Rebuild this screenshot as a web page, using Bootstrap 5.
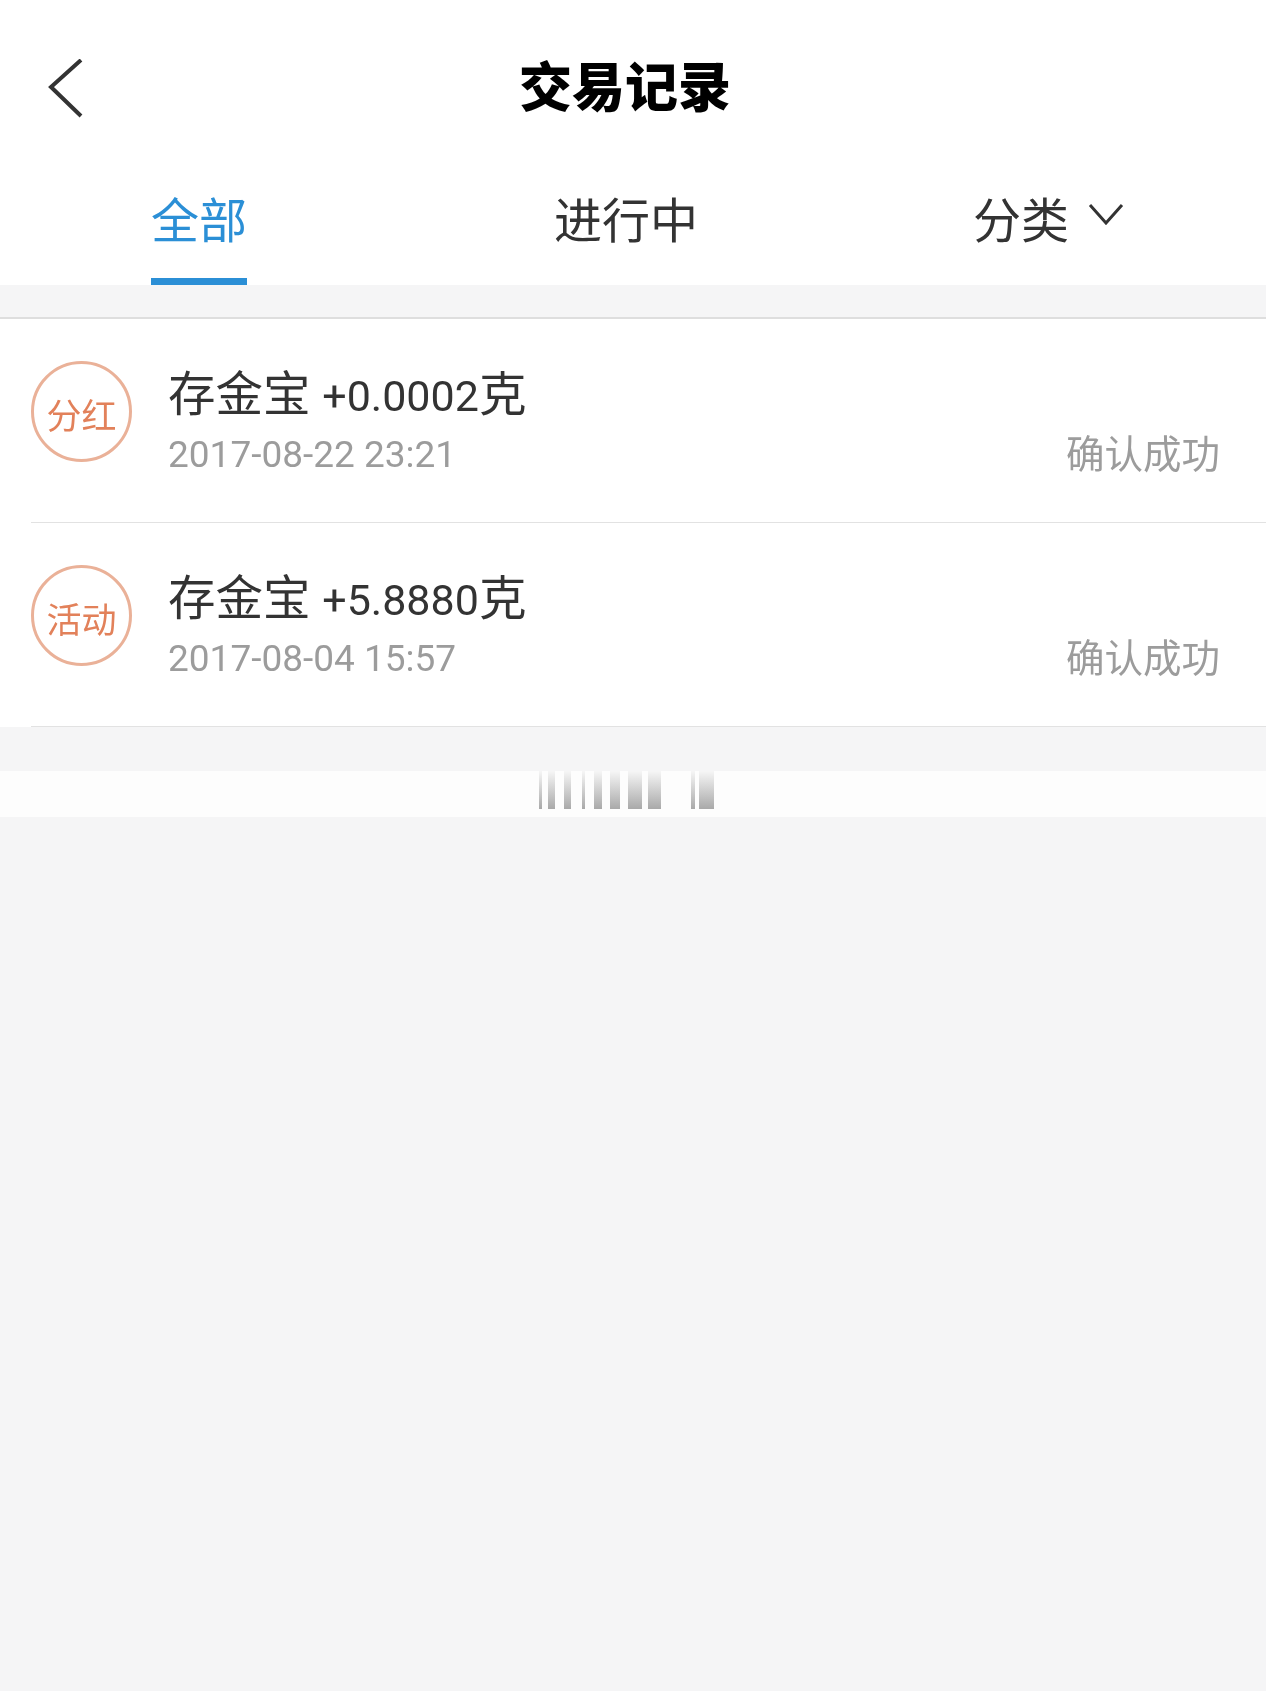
<!DOCTYPE html>
<html lang="zh-CN">

<head>
    <meta charset="UTF-8">
    <meta name="viewport" content="width=device-width, initial-scale=1">
    <title>交易记录</title>
    <link href="https://cdn.jsdelivr.net/npm/bootstrap@5.3.0/dist/css/bootstrap.min.css" rel="stylesheet">
    <style>
        body {
            background: #f5f5f6;
            min-height: 1691px;
            font-family: Roboto, "Noto Sans CJK SC", sans-serif;
            color: #333;
        }

        .top-bar { height: 174px; padding: 59px 0 0 48px; }
        .top-bar svg { display: block; }
        .page-title {
            position: absolute;
            left: 0;
            right: 16px;
            top: 53px;
            margin: 0;
            font: 900 53px/62px "Noto Sans CJK SC", sans-serif;
            color: #000;
            text-align: center;
        }

        .tab-row { height: 111px; }
        .tab-cell { font: 400 48px/86px "Noto Sans CJK SC", sans-serif; color: #333; height: 111px; filter: blur(.4px); }
        .tab-all { padding-right: 24px; }
        .tab-mid { padding-right: 14px; }
        .tab-cat { padding-right: 13px; }
        .tab-on { display: inline-block; height: 111px; color: #2b8fd6; border-bottom: 7px solid #2b8fd6; }
        .cat-arrow { margin: 0 0 22px 19px; }

        .gap-band { height: 34px; border-bottom: 2px solid #dedede; }

        .tx-row { padding: 0 0 0 31px; border: 0; background: #fff; }
        .tx-inner { height: 204px; padding: 42px 46px 0 0; border-bottom: 1px solid #e2e2e2; }
        .tx-stamp {
            width: 101px;
            height: 101px;
            border: 3px solid #eab198;
            color: #e2815a;
            font: 400 35px/1 "Noto Sans CJK SC", sans-serif;
            padding-top: 4px;
            flex: none;
            filter: blur(.3px);
        }
        .tx-body { margin-left: 36px; filter: blur(.4px); }
        .tx-name { font-size: 47.5px; line-height: 62px; margin-top: 3px; color: #333; }
        .tx-name .amount { font-size: 43px; }
        .tx-date { font-size: 37px; line-height: 50px; color: #9c9c9c; margin-top: 3px; }
        .tx-state { font: 400 38.5px/50px "Noto Sans CJK SC", sans-serif; color: #9c9c9c; margin-top: 65px; filter: blur(.4px); }

        .blur-strip { height: 46px; margin-top: 44px; background: #fdfdfd; padding-left: 538px; }
        .blur-strip svg { display: block; filter: blur(.6px); }
    </style>
</head>

<body>
    <header class="bg-white position-relative">
        <div class="top-bar">
            <svg width="38" height="60" viewBox="0 0 38 60" fill="none" stroke="#333" stroke-width="4">
                <path d="M33 1 3 28 33 57" />
            </svg>
        </div>
        <h1 class="page-title">交易记录</h1>
        <div class="row g-0 tab-row text-center">
            <div class="col-4 tab-cell tab-all"><span class="tab-on">全部</span></div>
            <div class="col-4 tab-cell tab-mid">进行中</div>
            <div class="col-4 tab-cell tab-cat">分类<svg class="cat-arrow" width="36" height="22" viewBox="0 0 36 22" fill="none" stroke="#333" stroke-width="3"><path d="M2 2 18 20 34 2" /></svg></div>
        </div>
    </header>

    <div class="gap-band"></div>

    <!-- transaction records -->
    <div class="list-group list-group-flush">
        <div class="list-group-item tx-row">
            <div class="d-flex tx-inner">
                <div class="tx-stamp rounded-circle d-flex align-items-center justify-content-center">分红</div>
                <div class="tx-body flex-grow-1">
                    <div class="tx-name">存金宝 <span class="amount">+0.0002</span>克</div>
                    <div class="tx-date">2017-08-22 23:21</div>
                </div>
                <div class="tx-state">确认成功</div>
            </div>
        </div>
        <div class="list-group-item tx-row">
            <div class="d-flex tx-inner">
                <div class="tx-stamp rounded-circle d-flex align-items-center justify-content-center">活动</div>
                <div class="tx-body flex-grow-1">
                    <div class="tx-name">存金宝 <span class="amount">+5.8880</span>克</div>
                    <div class="tx-date">2017-08-04 15:57</div>
                </div>
                <div class="tx-state">确认成功</div>
            </div>
        </div>
    </div>

    <div class="blur-strip">
        <svg width="180" height="40" viewBox="0 0 180 40">
            <defs>
                <linearGradient id="fade" x1="0" y1="0" x2="0" y2="1">
                    <stop offset="0" stop-color="#f6f6f6" />
                    <stop offset="1" stop-color="#a9a9a9" />
                </linearGradient>
            </defs>
            <g fill="url(#fade)">
                <rect x="1" y="0" width="3" height="38" />
                <rect x="10" y="0" width="7" height="38" />
                <rect x="26" y="0" width="7" height="38" />
                <rect x="44" y="0" width="3" height="38" />
                <rect x="56" y="0" width="8" height="38" />
                <rect x="72" y="0" width="10" height="38" />
                <rect x="90" y="0" width="14" height="38" />
                <rect x="110" y="0" width="13" height="38" />
                <rect x="153" y="0" width="4" height="38" />
                <rect x="161" y="0" width="15" height="38" />
            </g>
        </svg>
    </div>
    <script src="https://cdn.jsdelivr.net/npm/bootstrap@5.3.0/dist/js/bootstrap.bundle.min.js"></script>
</body>

</html>
